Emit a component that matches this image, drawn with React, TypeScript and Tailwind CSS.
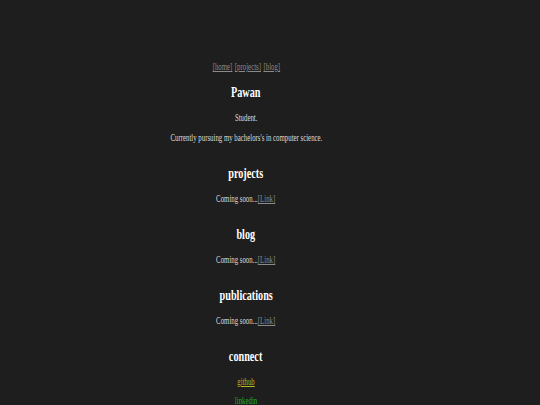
import React from "react";

const serif = { fontFamily: '"Liberation Serif", "Times New Roman", serif' };

const body = "text-[11px] leading-[12px] scale-x-[0.62] whitespace-nowrap";
const head = "text-[15px] leading-[16px] font-bold text-white scale-x-[0.68] whitespace-nowrap";

function Section({ title }: { title: string }) {
  return (
    <>
      <h2 className={`mt-[22px] ${head}`}>{title}</h2>
      <p className={`mt-[11px] text-[#dcdcdc] ${body}`}>
        Coming soon...<a className="text-[#8a8a8a] underline" href="#">[Link]</a>
      </p>
    </>
  );
}

export default function App() {
  return (
    <div className="min-h-[405px] w-full bg-[#1e1e1e] overflow-hidden" style={serif}>
      <div className="flex flex-col items-center pt-[60px] pr-[48px]">
        <nav className={`text-[#8a8a8a] flex gap-[4px] ${body}`}>
          <a className="underline" href="#">[home]</a>
          <a className="underline" href="#">[projects]</a>
          <a className="underline" href="#">[blog]</a>
        </nav>
        <h1 className={`mt-[12px] ${head}`}>Pawan</h1>
        <p className={`mt-[11px] text-[#dcdcdc] ${body}`}>Student.</p>
        <p className={`mt-[8px] text-[#dcdcdc] ${body}`}>
          Currently pursuing my bachelors's in computer science.
        </p>
        <Section title="projects" />
        <Section title="blog" />
        <Section title="publications" />
        <h2 className={`mt-[22px] ${head}`}>connect</h2>
        <a className={`mt-[11px] text-[#b8b822] underline ${body}`} href="#">github</a>
        <a className={`mt-[7px] text-[#22b022] underline ${body}`} href="#">linkedin</a>
      </div>
    </div>
  );
}
